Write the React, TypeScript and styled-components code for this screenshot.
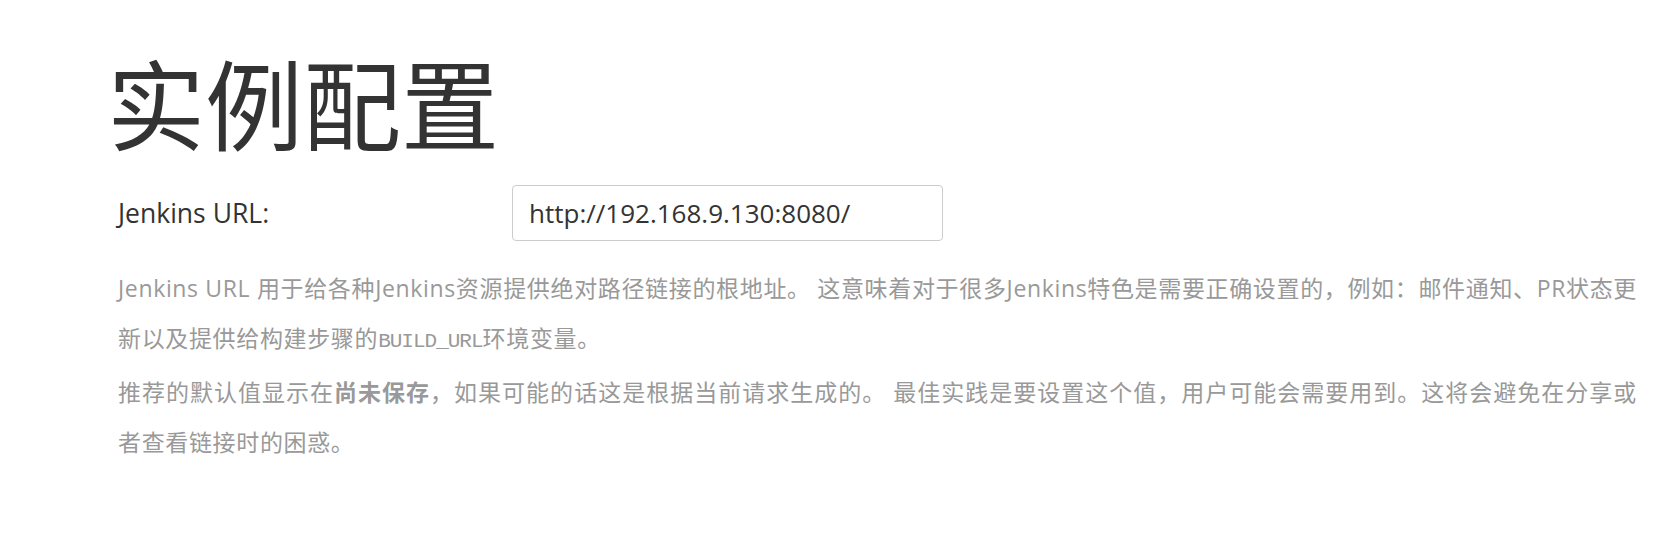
import styled, { createGlobalStyle } from "styled-components";

const GlobalStyle = createGlobalStyle`
  body {
    margin: 0;
    background: #fff;
    font-family: "Open Sans", "Noto Sans CJK SC", sans-serif;
  }
`;

const Page = styled.div`
  padding: 51px 40px 60px 118px;
`;

const Title = styled.h1`
  margin: 0 0 0 -11px;
  font-family: "Noto Sans CJK SC", sans-serif;
  font-size: 98px;
  font-weight: 400;
  line-height: 1;
  color: #333;
`;

const FieldRow = styled.div`
  display: flex;
  align-items: baseline;
  margin-top: 36px;
`;

const Label = styled.label`
  width: 394px;
  flex: none;
  font-size: 26.5px;
  color: #333;
`;

const UrlInput = styled.input`
  box-sizing: border-box;
  width: 431px;
  height: 56px;
  padding: 0 16px;
  border: 1px solid #ccc;
  border-radius: 4px;
  font-family: "Open Sans", sans-serif;
  font-size: 26px;
  color: #333;
  background: #fff;
  outline: none;
`;

const Help = styled.div`
  width: 1519px;
  margin-top: 22px;
  font-size: 23px;
  line-height: 50px;
  letter-spacing: 0.65px;
  color: #999;
  text-align: justify;
`;

const HelpLine = styled.p`
  margin: 0;
`;

const Code = styled.span`
  font-family: "Liberation Mono", "Courier New", monospace;
  font-size: 21px;
  letter-spacing: -1px;
`;

const Strong = styled.strong`
  font-weight: 700;
`;

export default function App() {
  return (
    <>
      <GlobalStyle />
      <Page>
        <Title>实例配置</Title>
        <FieldRow>
          <Label htmlFor="jenkins-url">Jenkins URL:</Label>
          <UrlInput id="jenkins-url" defaultValue="http://192.168.9.130:8080/" />
        </FieldRow>
        <Help>
          <HelpLine>
            Jenkins URL 用于给各种Jenkins资源提供绝对路径链接的根地址。 这意味着对于很多Jenkins特色是需要正确设置的，例如：邮件通知、PR状态更新以及提供给构建步骤的<Code>BUILD_URL</Code>环境变量。
          </HelpLine>
          <HelpLine>
            推荐的默认值显示在<Strong>尚未保存</Strong>，如果可能的话这是根据当前请求生成的。 最佳实践是要设置这个值，用户可能会需要用到。这将会避免在分享或者查看链接时的困惑。
          </HelpLine>
        </Help>
      </Page>
    </>
  );
}
